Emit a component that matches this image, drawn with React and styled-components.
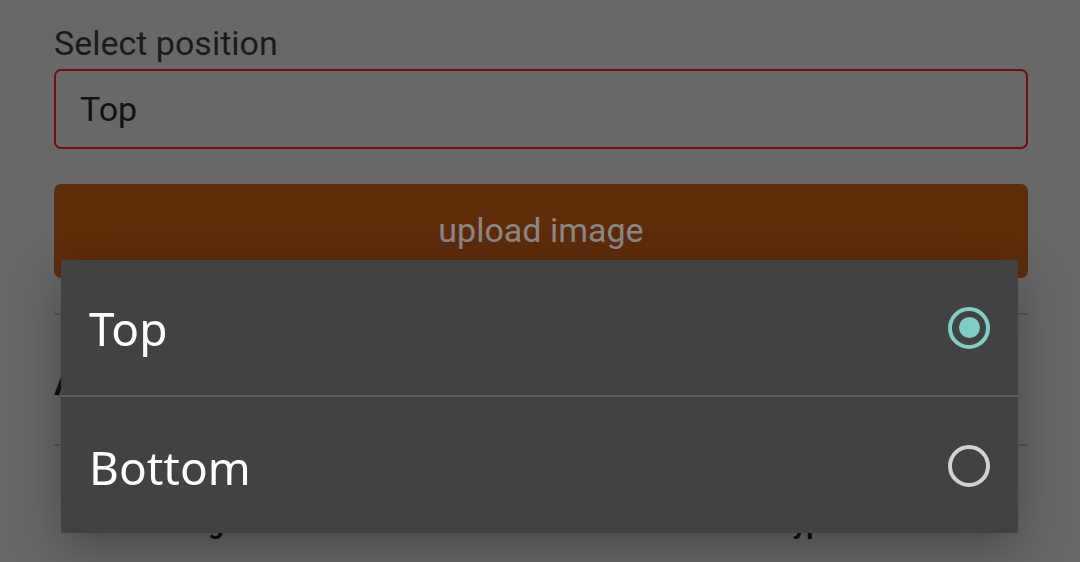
import { useState } from "react";
import styled, { createGlobalStyle } from "styled-components";

const GlobalStyle = createGlobalStyle`
  html, body {
    margin: 0;
    padding: 0;
    background: #686868;
    overflow: hidden;
  }
  * {
    box-sizing: border-box;
  }
`;

const Page = styled.div`
  width: 1080px;
  height: 562px;
  padding: 23px 52px 0 54px;
  font-family: Roboto, "Liberation Sans", sans-serif;
  background: #686868;
  overflow: hidden;
`;

const Label = styled.div`
  font-size: 34px;
  line-height: 40px;
  color: #1b1b1b;
`;

const Field = styled.div`
  margin-top: 6px;
  height: 80px;
  border: 2px solid #7a0b0b;
  border-radius: 7px;
  display: flex;
  align-items: center;
  padding: 0 24px;
  font-size: 34px;
  line-height: 40px;
  color: #121212;
`;

const UploadButton = styled.button`
  margin-top: 35px;
  width: 100%;
  height: 94px;
  border: none;
  border-radius: 7px;
  background: #5e2d0a;
  color: #898989;
  font-family: inherit;
  font-size: 34px;
  display: flex;
  align-items: center;
  justify-content: center;
  padding-bottom: 3px;
`;

const Divider = styled.hr`
  margin: ${({ $top }) => $top}px 0 0;
  border: none;
  height: 2px;
  background: #575757;
`;

const Heading = styled.div`
  font-size: 32px;
  font-weight: 700;
  line-height: 40px;
  color: #111;
  padding-top: 49px;
  height: 129px;
`;

const OptionRow = styled.div`
  display: grid;
  grid-template-columns: 710px 1fr;
  padding: 58px 0 0 12px;
  font-size: 28px;
  font-weight: 700;
  line-height: 40px;
  color: #111;
`;

const Layer = styled.div`
  position: fixed;
  inset: 0;
  padding: 260px 62px 0 61px;
`;

const Dialog = styled.div`
  width: 957px;
  background: #424242;
  border-radius: 2px;
  box-shadow: 0 14px 50px rgba(0, 0, 0, 0.32);
  overflow: hidden;
`;

const Option = styled.div`
  display: flex;
  align-items: center;
  justify-content: space-between;
  padding: 0 28px 0 28px;
  border-top: ${({ $first }) => ($first ? "none" : "2px solid #5d5d5d")};
  height: ${({ $first }) => ($first ? 135 : 138)}px;
  cursor: pointer;
`;

const OptionText = styled.span`
  font-family: "Noto Sans", "Open Sans", sans-serif;
  font-size: 46px;
  color: #ffffff;
  padding-top: ${({ $first }) => ($first ? 1 : 4)}px;
`;

const Radio = styled.span`
  width: 42px;
  height: 42px;
  border-radius: 50%;
  border: ${({ $on }) => ($on ? "4.5px solid #7fcec5" : "4px solid #d2d2d2")};
  display: flex;
  align-items: center;
  justify-content: center;
  margin-top: ${({ $first }) => ($first ? 0 : 2)}px;

  &::after {
    content: "";
    width: 21px;
    height: 21px;
    border-radius: 50%;
    background: #7fcec5;
    display: ${({ $on }) => ($on ? "block" : "none")};
  }
`;

const options = ["Top", "Bottom"];

export default function App() {
  const [value, setValue] = useState("Top");

  return (
    <>
      <GlobalStyle />
      <Page>
        <Label>Select position</Label>
        <Field>{value}</Field>
        <UploadButton>upload image</UploadButton>
        <Divider $top={35} />
        <Heading>Alignment</Heading>
        <Divider $top={0} />
        <OptionRow>
          <span>Add heading</span>
          <span>Type</span>
        </OptionRow>
      </Page>
      <Layer>
        <Dialog>
          {options.map((opt, i) => (
            <Option key={opt} $first={i === 0} onClick={() => setValue(opt)}>
              <OptionText $first={i === 0}>{opt}</OptionText>
              <Radio $on={value === opt} $first={i === 0} />
            </Option>
          ))}
        </Dialog>
      </Layer>
    </>
  );
}
